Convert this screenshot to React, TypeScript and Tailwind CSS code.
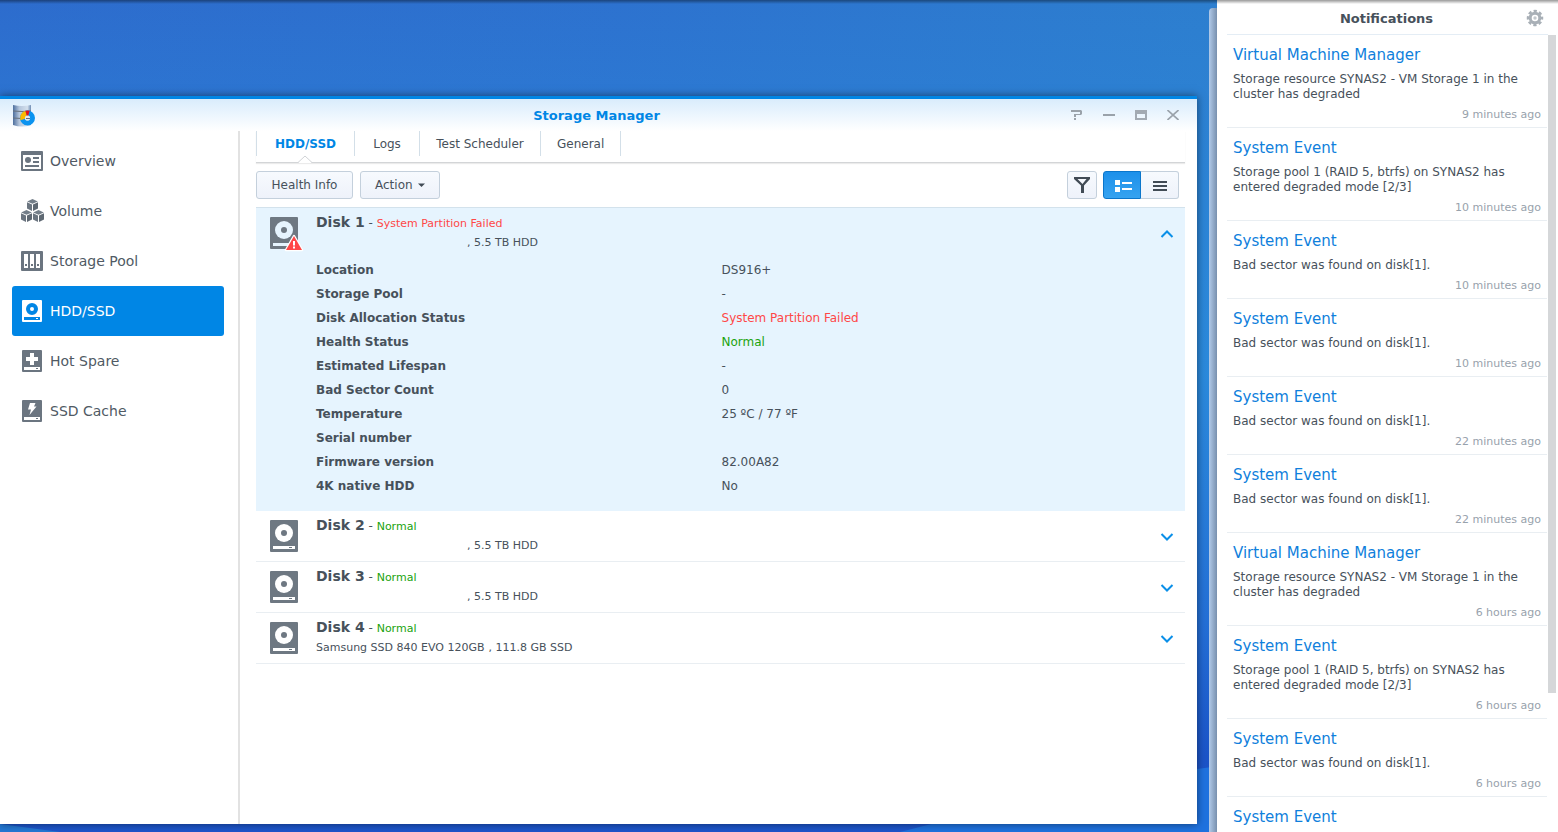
import { useState } from 'react'
import type { ReactNode } from 'react'

const GREY = '#6b7580'

function OverviewIcon() {
  return (
    <svg width="22" height="22" viewBox="0 0 22 22" aria-hidden="true">
      <rect x="0" y="1" width="22" height="20" rx="1" fill={GREY} />
      <rect x="2" y="5" width="18" height="14" fill="#fff" />
      <circle cx="7" cy="10" r="3" fill={GREY} />
      <path d="M12 8h6M12 12h6M4 16h14" stroke={GREY} strokeWidth="2" />
    </svg>
  )
}

function Cube({ x, y }: { x: number; y: number }) {
  return (
    <g transform={`translate(${x} ${y})`}>
      <path d="M5.5 0L10.8 2.4L5.5 4.8L0.2 2.4Z" fill="#737e89" />
      <path d="M0 3.2L5 5.6V12L0 9.4Z" fill={GREY} />
      <path d="M11 3.2L6 5.6V12L11 9.4Z" fill="#5f6973" />
    </g>
  )
}

function VolumeIcon() {
  return (
    <svg width="24" height="24" viewBox="0 0 24 24" aria-hidden="true">
      <Cube x={6} y={0} />
      <Cube x={0} y={11} />
      <Cube x={12} y={11} />
    </svg>
  )
}

function PoolIcon() {
  return (
    <svg width="22" height="22" viewBox="0 0 22 22" aria-hidden="true">
      <rect x="0" y="1" width="22" height="20" rx="1" fill={GREY} />
      <path d="M3 4h4v14H3zM9 4h4v14H9zM15 4h4v14h-4z" fill="#fff" />
      <path d="M4 14h2v2H4zM10 14h2v2h-2zM16 14h2v2h-2z" fill={GREY} />
    </svg>
  )
}

function DriveIcon() {
  return (
    <svg width="22" height="22" viewBox="0 0 22 22" aria-hidden="true">
      <rect x="1" y="0" width="20" height="22" rx="1" fill="#fff" />
      <circle cx="11" cy="9" r="4" fill="none" stroke="#0086e5" strokeWidth="4" />
      <rect x="3" y="17" width="16" height="3" fill="#0086e5" />
      <rect x="15" y="18" width="2" height="1" fill="#fff" />
    </svg>
  )
}

function SpareIcon() {
  return (
    <svg width="22" height="22" viewBox="0 0 22 22" aria-hidden="true">
      <rect x="1" y="0" width="20" height="22" rx="1" fill={GREY} />
      <path d="M9 3h4v4h4v4h-4v4H9v-4H5V7h4z" fill="#fff" />
      <rect x="3" y="17" width="16" height="3" fill="#fff" />
      <rect x="15" y="18" width="2" height="1" fill={GREY} />
    </svg>
  )
}

function CacheIcon() {
  return (
    <svg width="22" height="22" viewBox="0 0 22 22" aria-hidden="true">
      <rect x="1" y="0" width="20" height="22" rx="1" fill={GREY} />
      <path d="M9 3h5.5L13 6.5h2.5L8.5 15L10 9.5H7z" fill="#fff" />
      <rect x="3" y="17" width="16" height="3" fill="#fff" />
      <rect x="15" y="18" width="2" height="1" fill={GREY} />
    </svg>
  )
}

function DiskIcon({ hole, warning }: { hole: string; warning?: boolean }) {
  return (
    <svg width="34" height="36" viewBox="0 0 34 36" aria-hidden="true">
      <rect x="0" y="0" width="28" height="32" rx="1" fill="#6e7882" />
      <circle cx="14" cy="13" r="9" fill={hole} />
      <circle cx="14" cy="13" r="3" fill="#6e7882" />
      <rect x="3" y="26" width="22" height="3" fill={hole} />
      <rect x="19" y="27" width="3" height="1" fill="#6e7882" />
      {warning && (
        <>
          <path d="M24 19L32 33H16Z" fill="#ff4747" stroke="#fff" strokeWidth="2.5" strokeLinejoin="round" />
          <path d="M24 19L32 33H16Z" fill="#ff4747" />
          <path d="M23 24h2v4.5h-2zM23 29.5h2v2h-2z" fill="#fff" />
        </>
      )}
    </svg>
  )
}

function AppIcon() {
  return (
    <svg width="24" height="24" viewBox="0 0 24 24" aria-hidden="true">
      <defs>
        <linearGradient id="cylinder">
          <stop offset="0" stopColor="#4d6f9e" />
          <stop offset="0.35" stopColor="#b5c6dc" />
          <stop offset="0.8" stopColor="#d3dfec" />
          <stop offset="1" stopColor="#6f8db4" />
        </linearGradient>
      </defs>
      <path d="M1 1q9 2 18 0v20q-9 3-18 0z" fill="url(#cylinder)" />
      <path d="M1 7q9 1 18 0M1 14q9 1 18 0" fill="none" stroke="#66707c" strokeWidth="1" />
      <circle cx="15.5" cy="14" r="5" fill="none" stroke="#0a93f0" strokeWidth="5" />
      <path d="M15.5 14L8.4 16.3A7.5 7.5 0 0 1 13.5 6.8Z" fill="#fbb900" />
      <path d="M15.5 14L13.3 6.8A7.5 7.5 0 0 1 17.7 6.8Z" fill="#e60f1e" />
      <circle cx="15.5" cy="14" r="2.6" fill="#dfe7f0" />
      <path d="M14 14.5h4" stroke="#5f6f80" strokeWidth="1" />
    </svg>
  )
}

function GearIcon() {
  return (
    <svg width="18" height="18" viewBox="0 0 18 18" aria-hidden="true">
      <circle cx="9" cy="9" r="7" fill="none" stroke="#a9b0b7" strokeWidth="2.5" strokeDasharray="3.2 2.298" strokeDashoffset="1.6" />
      <circle cx="9" cy="9" r="4.8" fill="none" stroke="#a9b0b7" strokeWidth="3" />
      <circle cx="9" cy="9" r="1.7" fill="#c3c8cd" />
    </svg>
  )
}

function Chevron({ up }: { up?: boolean }) {
  return (
    <svg width="14" height="8" viewBox="0 0 14 8" aria-hidden="true">
      <path d={up ? 'M1.5 7L7 1.5L12.5 7' : 'M1.5 1L7 6.5L12.5 1'} fill="none" stroke="#0a8fe8" strokeWidth="2" />
    </svg>
  )
}

function Wallpaper() {
  return (
    <svg className="absolute inset-0 size-full" viewBox="0 0 1558 832" preserveAspectRatio="none" aria-hidden="true">
      <defs>
        <linearGradient id="sky">
          <stop offset="0" stopColor="#2d6ccd" />
          <stop offset="0.4" stopColor="#2d72cf" />
          <stop offset="0.8" stopColor="#2d7fcf" />
        </linearGradient>
        <linearGradient id="glow" x1="0" y1="0" x2="0" y2="1">
          <stop offset="0" stopColor="#2b8bdd" stopOpacity="0" />
          <stop offset="0.45" stopColor="#2b8bdd" stopOpacity="0.9" />
          <stop offset="0.75" stopColor="#246fd6" />
          <stop offset="0.91" stopColor="#1b54c8" />
          <stop offset="1" stopColor="#1d55cb" />
        </linearGradient>
      </defs>
      <rect width="1558" height="832" fill="url(#sky)" />
      <rect width="1558" height="832" fill="url(#glow)" />
      <path d="M900 832Q1060 790 1197 769L1558 720V832Z" fill="#1f72df" />
      <path d="M0 824L60 832H0Z" fill="#2478d4" />
    </svg>
  )
}

const navItems: { label: string; icon: ReactNode }[] = [
  { label: 'Overview', icon: <OverviewIcon /> },
  { label: 'Volume', icon: <VolumeIcon /> },
  { label: 'Storage Pool', icon: <PoolIcon /> },
  { label: 'HDD/SSD', icon: <DriveIcon /> },
  { label: 'Hot Spare', icon: <SpareIcon /> },
  { label: 'SSD Cache', icon: <CacheIcon /> },
]

const tabs = [
  { label: 'HDD/SSD', width: 'min-w-[99px] border-l' },
  { label: 'Logs', width: 'min-w-[65px]' },
  { label: 'Test Scheduler', width: 'min-w-[121px]' },
  { label: 'General', width: 'min-w-[80px]' },
]

const details = [
  { label: 'Location', value: 'DS916+' },
  { label: 'Storage Pool', value: '-' },
  { label: 'Disk Allocation Status', value: 'System Partition Failed', color: 'text-[#ff4747]' },
  { label: 'Health Status', value: 'Normal', color: 'text-[#1ba30e]' },
  { label: 'Estimated Lifespan', value: '-' },
  { label: 'Bad Sector Count', value: '0' },
  { label: 'Temperature', value: '25 ºC / 77 ºF' },
  { label: 'Serial number', value: '' },
  { label: 'Firmware version', value: '82.00A82' },
  { label: '4K native HDD', value: 'No' },
]

const disks = [
  { name: 'Disk 1', status: 'System Partition Failed', failed: true, model: '', size: ', 5.5 TB HDD' },
  { name: 'Disk 2', status: 'Normal', failed: false, model: '', size: ', 5.5 TB HDD' },
  { name: 'Disk 3', status: 'Normal', failed: false, model: '', size: ', 5.5 TB HDD' },
  { name: 'Disk 4', status: 'Normal', failed: false, model: 'Samsung SSD 840 EVO 120GB', size: ', 111.8 GB SSD' },
]

const resourceText = 'Storage resource SYNAS2 - VM Storage 1 in the cluster has degraded'
const poolText = 'Storage pool 1 (RAID 5, btrfs) on SYNAS2 has entered degraded mode [2/3]'
const sectorText = 'Bad sector was found on disk[1].'

const notifications = [
  { title: 'Virtual Machine Manager', text: resourceText, time: '9 minutes ago' },
  { title: 'System Event', text: poolText, time: '10 minutes ago' },
  { title: 'System Event', text: sectorText, time: '10 minutes ago' },
  { title: 'System Event', text: sectorText, time: '10 minutes ago' },
  { title: 'System Event', text: sectorText, time: '22 minutes ago' },
  { title: 'System Event', text: sectorText, time: '22 minutes ago' },
  { title: 'Virtual Machine Manager', text: resourceText, time: '6 hours ago' },
  { title: 'System Event', text: poolText, time: '6 hours ago' },
  { title: 'System Event', text: sectorText, time: '6 hours ago' },
  { title: 'System Event' },
]

function TitleBar() {
  return (
    <header className="flex h-8 shrink-0 items-center bg-linear-to-b from-[#d9ecfc] to-white pr-4 pl-3">
      <div className="flex flex-1 pt-0.5">
        <AppIcon />
      </div>
      <h1 className="pt-0.5 text-[13px] font-bold text-[#0086e5]">Storage Manager</h1>
      <div className="flex flex-1 justify-end gap-4">
        <button aria-label="Help" className="flex size-4 items-center justify-center">
          <svg width="12" height="10" viewBox="0 0 12 10">
            <path d="M0 0h10l1 1v3l-1 1H5v2H3V4h6V2H0zM3 8h2v2H3z" fill="#9aa2aa" />
          </svg>
        </button>
        <button aria-label="Minimize" className="flex size-4 items-center justify-center">
          <svg width="12" height="10" viewBox="0 0 12 10">
            <path d="M0 5h12" stroke="#9aa2aa" strokeWidth="2" />
          </svg>
        </button>
        <button aria-label="Maximize" className="flex size-4 items-center justify-center">
          <svg width="12" height="10" viewBox="0 0 12 10">
            <path d="M0 0h12v10H0zM2 4v4h8V4z" fill="#a3aab2" fillRule="evenodd" />
          </svg>
        </button>
        <button aria-label="Close" className="flex size-4 items-center justify-center">
          <svg width="12" height="10" viewBox="0 0 12 10">
            <path d="M0.5 0L11.5 10M11.5 0L0.5 10" stroke="#9aa2aa" strokeWidth="1.6" />
          </svg>
        </button>
      </div>
    </header>
  )
}

function Sidebar() {
  return (
    <nav className="w-60 shrink-0 border-r-2 border-[#e2e2e2] px-3 pt-[5px]">
      {navItems.map((item) => {
        const active = item.label === 'HDD/SSD'
        return (
          <a
            key={item.label}
            href="#"
            aria-current={active ? 'page' : undefined}
            className={
              active
                ? 'mr-0.5 flex h-[50px] items-center rounded-[3px] bg-[#0086e5] pl-[9px] text-sm text-white'
                : 'mr-0.5 flex h-[50px] items-center pl-[9px] text-sm text-[#505a64]'
            }
          >
            <span className="flex w-[29px]">{item.icon}</span>
            {item.label}
          </a>
        )
      })}
    </nav>
  )
}

function Tabs() {
  return (
    <div role="tablist" className="relative flex h-8 border-b border-[#d3d5d7] shadow-[0_1px_1px_rgba(0,0,0,0.08)]">
      {tabs.map((tab, i) => (
        <button
          key={tab.label}
          role="tab"
          aria-selected={i === 0}
          className={`h-[25px] border-r border-[#d3dfe8] px-4 text-xs ${tab.width} ${i === 0 ? 'font-bold text-[#0086e5]' : ''}`}
        >
          {tab.label}
        </button>
      ))}
      <svg className="absolute -bottom-px left-[42px]" width="14" height="8" viewBox="0 0 14 8" aria-hidden="true">
        <path d="M0 8L7 1L14 8Z" fill="#fff" />
        <path d="M0 7.5L7 1L14 7.5" fill="none" stroke="#d0d3d6" />
      </svg>
    </div>
  )
}

function Toolbar() {
  const button = 'flex h-7 items-center justify-center border border-[#c4d0dc] bg-linear-to-b from-[#f7fafe] to-[#eef2fa] text-xs'
  return (
    <div className="flex items-center py-2 pr-1.5">
      <button className={`${button} min-w-[97px] rounded-[3px] px-3.5`}>Health Info</button>
      <button className={`${button} ml-[7px] gap-[5px] rounded-[3px] px-3.5`}>
        Action
        <svg width="7" height="4" viewBox="0 0 7 4" aria-hidden="true">
          <path d="M0 0.5h7L3.5 4z" fill="#414b55" />
        </svg>
      </button>
      <button aria-label="Filter" className={`${button} ml-auto w-[30px] rounded-[3px]`}>
        <svg width="16" height="16" viewBox="0 0 16 16">
          <path d="M0 0H16V2L10 8.5V16H7V8.5L0 2ZM3.5 2L8.5 7L12.5 2Z" fill="#414b55" fillRule="evenodd" />
        </svg>
      </button>
      <button
        aria-label="Detail view"
        aria-pressed="true"
        className="ml-1.5 flex h-7 w-[38px] items-center justify-center rounded-l-[3px] border border-[#0b76cb] bg-linear-to-b from-[#1c90ea] to-[#36a3f0] pt-0.5 pl-0.5"
      >
        <svg width="17" height="12" viewBox="0 0 17 12">
          <path d="M0 0h5v5H0zM0 7h5v5H0zM7 2h10v2H7zM7 8h10v2H7z" fill="#fff" />
        </svg>
      </button>
      <button aria-label="List view" className={`${button} w-[38px] rounded-r-[3px] border-l-0 pt-0.5`}>
        <svg width="14" height="10" viewBox="0 0 14 10">
          <path d="M0 0h14v2H0zM0 4h14v2H0zM0 8h14v2H0z" fill="#414b55" />
        </svg>
      </button>
    </div>
  )
}

function DiskDetails() {
  return (
    <dl className="pb-[13px] pl-[60px]">
      {details.map((row) => (
        <div key={row.label} className="grid h-6 grid-cols-[7fr_8fr] items-center text-xs">
          <dt className="font-bold">{row.label}</dt>
          <dd className={row.color}>{row.value}</dd>
        </div>
      ))}
    </dl>
  )
}

function DiskList() {
  const [open, setOpen] = useState('Disk 1')

  return (
    <ul className="border-t border-[#d3e2ec]">
      {disks.map((disk) => {
        const expanded = disk.name === open
        return (
          <li key={disk.name} className={expanded ? 'bg-[#e6f4fe]' : 'border-b border-[#e9eef2] bg-white'}>
            <div className="flex h-[50px] items-center pr-[11px] pl-3.5">
              <div className="h-8 w-[46px]">
                <DiskIcon hole={expanded ? '#e6f4fe' : '#fff'} warning={disk.failed} />
              </div>
              <div className="flex-1">
                <div className="h-5 leading-5">
                  <span className="text-sm font-bold">{disk.name}</span>
                  <span className="text-xs"> - </span>
                  <span className={disk.failed ? 'text-[11px] text-[#ff4747]' : 'text-[11px] text-[#1ba30e]'}>
                    {disk.status}
                  </span>
                </div>
                <div className="flex h-[22px] items-center gap-1 text-[11px]">
                  <span className={disk.model ? '' : 'w-[147px]'}>{disk.model}</span>
                  <span>{disk.size}</span>
                </div>
              </div>
              <button
                aria-label={`${disk.name} details`}
                aria-expanded={expanded}
                onClick={() => setOpen(expanded ? '' : disk.name)}
                className="pt-2.5 pb-2"
              >
                <Chevron up={expanded} />
              </button>
            </div>
            {expanded && <DiskDetails />}
          </li>
        )
      })}
    </ul>
  )
}

function Notifications() {
  return (
    <aside className="relative flex w-[349px] shrink-0">
      <div className="mt-2 w-2 shrink-0 rounded-tl bg-linear-to-r from-[#b2cbea] to-[#7890ae]" />
      <div className="flex min-w-0 flex-1 flex-col bg-white pt-[3px]">
        <div className="mx-2.5 flex h-8 shrink-0 items-center border-b border-[#e4edf5]">
          <h2 className="flex-1 pl-5 text-center text-[13px] font-bold">Notifications</h2>
          <button aria-label="Settings" className="mr-1 mb-0.5">
            <GearIcon />
          </button>
        </div>
        <div className="flex min-h-0 flex-1 justify-between">
          <ul className="ml-2.5 min-w-0 flex-1 overflow-hidden">
            {notifications.map((n, i) => (
              <li key={i} className="border-b border-[#e9eef2] px-1.5 pt-2.5 pb-[5px]">
                <a href="#" className="block text-[15px] leading-5 text-[#0f7fdc]">
                  {n.title}
                </a>
                {n.text && <p className="mt-[7px] text-xs leading-[15px]">{n.text}</p>}
                {n.time && <p className="mt-1.5 text-right text-[11px] leading-[14px] text-[#98a2ac]">{n.time}</p>}
              </li>
            ))}
          </ul>
          <div className="mr-0.5 ml-px h-[658px] w-2 bg-[#d5d7d9]" />
        </div>
      </div>
    </aside>
  )
}

export default function App() {
  return (
    <div className="relative flex h-screen overflow-hidden bg-[#2d6ccd] font-['Verdana','DejaVu_Sans',sans-serif] text-[#47515b]">
      <Wallpaper />
      <div className="relative flex min-w-0 flex-1 flex-col pt-24 pr-3 pb-2">
        <main className="flex min-h-0 flex-1 flex-col border-t-[3px] border-[#0086e5] bg-white shadow-[0_0_8px_rgba(0,0,0,0.5)]">
          <TitleBar />
          <div className="flex min-h-0 flex-1">
            <Sidebar />
            <section className="min-w-0 flex-1 pr-3 pl-4">
              <Tabs />
              <Toolbar />
              <DiskList />
            </section>
          </div>
        </main>
      </div>
      <Notifications />
      <div className="pointer-events-none absolute inset-x-0 top-0 h-1 bg-linear-to-b from-black/40 to-transparent" />
    </div>
  )
}
